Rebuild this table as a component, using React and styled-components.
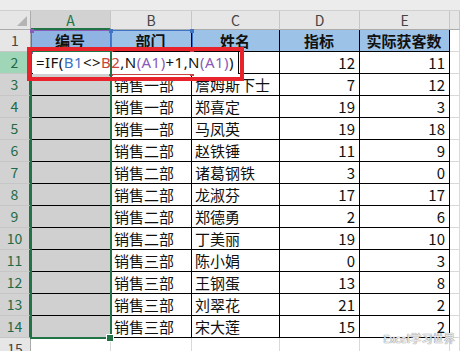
import React from "react";
import styled, { createGlobalStyle } from "styled-components";

const GlobalStyle = createGlobalStyle`
  html, body {
    margin: 0;
    padding: 0;
    background: #fff;
  }
  body {
    font-family: "Noto Sans CJK SC", "Noto Sans", sans-serif;
  }
`;

const GREEN = "#217346";

// B..E for rows 2-14 (row 2's B/C sit under the in-cell editor)
const data = [
    ["", "", 12, 11],
    ["销售一部", "詹姆斯下士", 7, 12],
    ["销售一部", "郑喜定", 19, 3],
    ["销售一部", "马凤英", 19, 18],
    ["销售二部", "赵铁锤", 11, 9],
    ["销售二部", "诸葛钢铁", 3, 0],
    ["销售二部", "龙淑芬", 17, 17],
    ["销售二部", "郑德勇", 2, 6],
    ["销售二部", "丁美丽", 19, 10],
    ["销售三部", "陈小娟", 0, 3],
    ["销售三部", "王钢蛋", 13, 8],
    ["销售三部", "刘翠花", 21, 2],
    ["销售三部", "宋大莲", 15, 2],
];

const headers = ["编号", "部门", "姓名", "指标", "实际获客数"];

const Sheet = styled.div`
    position: relative;
    width: 460px;
    height: 351px;
    overflow: hidden;
    background: #fff;
`;

const TopStrip = styled.div`
    height: 10px;
    background: #ececec;
    border-bottom: 1px solid #d0d0d0;
`;

const Grid = styled.div`
    display: grid;
    grid-template-columns: 31px 80px 81px 88px 80px 90px 1fr;
    grid-template-rows: 19px repeat(15, 22px);
`;

const Corner = styled.div`
    position: relative;
    background: #e6e6e6;
    border-right: 1px solid #ababab;
    border-bottom: 1px solid #ababab;
    box-sizing: border-box;
    &::after {
        content: "";
        position: absolute;
        right: 3px;
        bottom: 3px;
        border-left: 10px solid transparent;
        border-bottom: 10px solid #b4b4b4;
    }
`;

const ColHeader = styled.div`
    display: flex;
    align-items: center;
    justify-content: center;
    box-sizing: border-box;
    font-size: 14px;
    background: ${(p) => (p.$active ? "#d2d2d2" : "#e6e6e6")};
    color: ${(p) => (p.$active ? GREEN : "#444")};
    border-right: 1px solid #c6c6c6;
    border-bottom: ${(p) => (p.$active ? `2px solid ${GREEN}` : "1px solid #ababab")};
`;

const rowHeaderBg = { normal: "#e6e6e6", active: "#a0d6b8", sel: "#d2d2d2" };

const RowHeader = styled.div`
    display: flex;
    align-items: center;
    justify-content: center;
    box-sizing: border-box;
    font-size: 14px;
    padding-bottom: 1px;
    background: ${(p) => rowHeaderBg[p.$state]};
    color: ${(p) => (p.$state === "normal" ? "#444" : "#1f6a46")};
    border-bottom: 1px solid #c6c6c6;
    border-right: ${(p) => (p.$state === "normal" ? "1px solid #ababab" : `2px solid ${GREEN}`)};
`;

const fills = { none: "#fff", blue: "#9cc3e7", blueDark: "#8fb3e2", sel: "#d0d0d0" };

const Cell = styled.div`
    display: flex;
    align-items: center;
    justify-content: ${(p) => (p.$right ? "flex-end" : p.$center ? "center" : "flex-start")};
    box-sizing: border-box;
    padding: 0 4px 1px 3px;
    font-size: 15px;
    font-weight: ${(p) => (p.$bold ? 700 : 400)};
    color: #111;
    white-space: nowrap;
    overflow: hidden;
    background: ${(p) => fills[p.$fill || "none"]};
    border-right: 1px solid ${(p) => (p.$plain ? "#d9d9d9" : "#000")};
    border-bottom: 1px solid ${(p) => (p.$plain ? "#d9d9d9" : "#000")};
`;

const RefBox = styled.div`
    position: absolute;
    left: ${(p) => p.$x}px;
    top: ${(p) => p.$y}px;
    width: ${(p) => p.$w}px;
    height: ${(p) => p.$h}px;
    box-sizing: border-box;
    border: 1px solid ${(p) => p.$color};
`;

const Handle = styled.span`
    position: absolute;
    width: 4px;
    height: 4px;
    background: ${(p) => p.$color};
    ${(p) => (p.$top ? "top: -2px;" : "bottom: -2px;")}
    ${(p) => (p.$left ? "left: -2px;" : "right: -2px;")}
`;

const Editor = styled.div`
    position: absolute;
    left: 33px;
    top: 52px;
    width: 206px;
    height: 22px;
    box-sizing: border-box;
    background: #fff;
    border-right: 1px solid #000;
    padding-left: 3px;
    font-family: "Noto Sans", sans-serif;
    font-size: 15px;
    letter-spacing: 0.45px;
    line-height: 21px;
    color: #111;
    white-space: nowrap;
`;

const Tok = styled.span`
    color: ${(p) => p.$c || "#111"};
`;

const Selection = styled.div`
    position: absolute;
    left: 30px;
    top: 50px;
    width: 82px;
    height: 289px;
    box-sizing: border-box;
    border: 2px solid ${GREEN};
`;

const FillHandle = styled.div`
    position: absolute;
    left: 107px;
    top: 335px;
    width: 6px;
    height: 6px;
    background: ${GREEN};
    outline: 1px solid #fff;
`;

const Callout = styled.div`
    position: absolute;
    left: 27px;
    top: 47px;
    width: 217px;
    height: 34px;
    box-sizing: border-box;
    border: 4px solid #e8232b;
`;

const Watermark = styled.div`
    position: absolute;
    right: 5px;
    bottom: 5px;
    font-size: 11px;
    color: #f4f4f4;
    text-shadow: 0 0 1px #777, 0 0 1px #777;
    letter-spacing: 0.2px;
`;

const Ref = ({ x, y, w, h, color }) => (
    <RefBox $x={x} $y={y} $w={w} $h={h} $color={color}>
        <Handle $color={color} $top $left />
        <Handle $color={color} $top />
        <Handle $color={color} $left />
        <Handle $color={color} />
    </RefBox>
);

const BLUE = "#3f73c6";
const RED = "#c8433f";
const PURPLE = "#8a5bb8";

export default function App() {
    return (
        <>
            <GlobalStyle />
            <Sheet>
                <TopStrip />
                <Grid>
                    <Corner />
                    {["A", "B", "C", "D", "E"].map((c) => (
                        <ColHeader key={c} $active={c === "A"}>
                            {c}
                        </ColHeader>
                    ))}
                    <ColHeader />

                    <RowHeader $state="normal">1</RowHeader>
                    {headers.map((h, i) => (
                        <Cell key={h} $center $bold $fill={i === 0 ? "blueDark" : "blue"}>
                            {h}
                        </Cell>
                    ))}
                    <Cell $plain />

                    {data.map((r, i) => {
                        const n = i + 2;
                        return (
                            <React.Fragment key={n}>
                                <RowHeader $state={n === 2 ? "active" : "sel"}>{n}</RowHeader>
                                <Cell $fill={n === 2 ? "none" : "sel"} />
                                <Cell>{r[0]}</Cell>
                                <Cell>{r[1]}</Cell>
                                <Cell $right>{r[2]}</Cell>
                                <Cell $right>{r[3]}</Cell>
                                <Cell $plain />
                            </React.Fragment>
                        );
                    })}

                    <RowHeader $state="normal">15</RowHeader>
                    {[0, 1, 2, 3, 4, 5].map((k) => (
                        <Cell key={k} $plain />
                    ))}
                </Grid>

                <Ref x={31} y={30} w={81} h={23} color={PURPLE} />
                <Ref x={110} y={30} w={83} h={23} color={BLUE} />
                <Ref x={110} y={52} w={83} h={23} color={RED} />
                <Editor>
                    <Tok>=IF(</Tok>
                    <Tok $c={BLUE}>B1</Tok>
                    <Tok>&lt;&gt;</Tok>
                    <Tok $c={RED}>B2</Tok>
                    <Tok>,N</Tok>
                    <Tok $c={PURPLE}>(A1)</Tok>
                    <Tok>+1,N</Tok>
                    <Tok $c={PURPLE}>(A1)</Tok>
                    <Tok>)</Tok>
                </Editor>
                <Selection />
                <FillHandle />
                <Callout />
                <Watermark>Excel学习世界</Watermark>
            </Sheet>
        </>
    );
}
